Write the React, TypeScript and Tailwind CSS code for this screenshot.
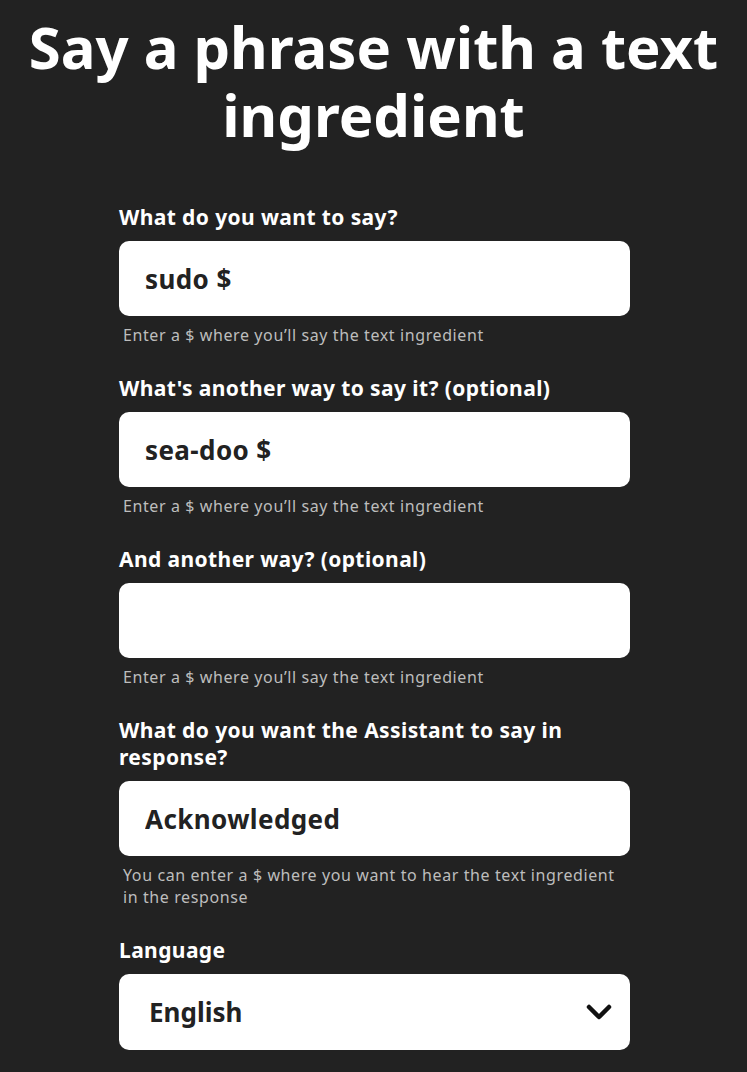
import { useState } from "react";

const font = { fontFamily: "'Noto Sans', 'Liberation Sans', sans-serif" };

function Field({
  label,
  value,
  hint,
}: {
  label: string;
  value: string;
  hint: string;
}) {
  const [text, setText] = useState(value);
  return (
    <div className="flex flex-col">
      <label className="text-white text-[21px] leading-[27px] font-bold tracking-[0.4px] mb-[10px]">{label}</label>
      <input
        value={text}
        onChange={(e) => setText(e.target.value)}
        className="bg-white rounded-[10px] h-[75px] px-[26px] text-[#222222] text-[26px] font-bold tracking-[0.4px] outline-none"
        style={font}
      />
      <p className="text-[#bdbdbd] text-[16px] leading-[22px] tracking-[0.6px] mt-[8px] pl-[4px] pr-[10px]">{hint}</p>
    </div>
  );
}

export default function App() {
  const hint = "Enter a $ where you’ll say the text ingredient";
  return (
    <div className="min-h-screen bg-[#222222] pt-[13px] pb-10" style={font}>
      <h1 className="text-white text-center font-bold text-[58px] leading-[68px] px-6">
        Say a phrase with a text ingredient
      </h1>

      <div className="w-[511px] ml-[119px] mt-[55px] flex flex-col gap-[29px]">
        <Field label="What do you want to say?" value="sudo $" hint={hint} />
        <Field label="What's another way to say it? (optional)" value="sea-doo $" hint={hint} />
        <Field label="And another way? (optional)" value="" hint={hint} />
        <Field
          label="What do you want the Assistant to say in response?"
          value="Acknowledged"
          hint="You can enter a $ where you want to hear the text ingredient in the response"
        />

        <div className="flex flex-col">
          <label className="text-white text-[21px] leading-[27px] font-bold tracking-[0.4px] mb-[10px]">Language</label>
          <div className="relative">
            <select
              className="appearance-none w-full bg-white rounded-[10px] h-[76px] pl-[30px] pr-12 text-[#222222] text-[26px] font-bold outline-none"
              style={font}
              defaultValue="en"
            >
              <option value="en">English</option>
              <option value="fr">French</option>
              <option value="de">German</option>
            </select>
            <svg
              className="absolute right-[18px] top-1/2 -translate-y-1/2 pointer-events-none"
              width="26"
              height="16"
              viewBox="0 0 26 16"
              fill="none"
            >
              <path d="M3 3l10 10L23 3" stroke="#111" strokeWidth="4.5" strokeLinecap="round" strokeLinejoin="round" />
            </svg>
          </div>
        </div>
      </div>
    </div>
  );
}
